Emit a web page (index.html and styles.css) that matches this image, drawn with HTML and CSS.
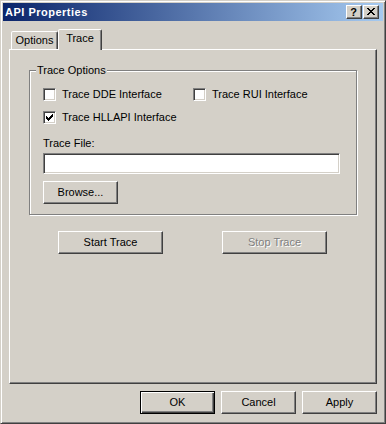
FILE: index.html
```html
<!DOCTYPE html>
<html>
<head>
<meta charset="utf-8">
<link rel="stylesheet" href="styles.css">
</head>
<body>
<div class="window">
  <div class="titlebar">
    <span class="title">API Properties</span>
    <span class="tbtn help">?</span>
    <span class="tbtn close"><svg width="8" height="7" viewBox="0 0 8 7" shape-rendering="crispEdges"><path fill="#000" d="M0 0h2v1h-2zM6 0h2v1h-2zM1 1h2v1h-2zM5 1h2v1h-2zM2 2h4v1h-4zM3 3h2v1h-2zM2 4h4v1h-4zM1 5h2v1h-2zM5 5h2v1h-2zM0 6h2v1h-2zM6 6h2v1h-2z"/></svg></span>
  </div>
  <div class="client">
    <div class="tabs">
      <div class="tab">Options</div>
      <div class="tab active">Trace</div>
    </div>
    <div class="panel">
      <div class="group">
        <span class="legend">Trace Options</span>
        <div class="cbrow">
          <div class="cb col1"><span class="box"></span><span>Trace DDE Interface</span></div>
          <div class="cb"><span class="box"></span><span>Trace RUI Interface</span></div>
        </div>
        <div class="cbrow second">
          <div class="cb"><span class="box"><svg width="7" height="7" viewBox="0 0 7 7" shape-rendering="crispEdges"><path fill="#000" d="M6 0h1v1h-1zM5 1h2v1h-2zM0 2h1v1h-1zM4 2h3v1h-3zM0 3h2v1h-2zM3 3h3v1h-3zM0 4h5v1h-5zM1 5h3v1h-3zM2 6h1v1h-1z"/></svg></span><span>Trace HLLAPI Interface</span></div>
        </div>
        <div class="flabel">Trace File:</div>
        <div class="input"></div>
        <div class="btn browse">Browse...</div>
      </div>
      <div class="traceBtns">
        <div class="btn wide">Start Trace</div>
        <div class="btn wide disabled">Stop Trace</div>
      </div>
    </div>
    <div class="dlgBtns">
      <div class="btn default">OK</div>
      <div class="btn">Cancel</div>
      <div class="btn">Apply</div>
    </div>
  </div>
</div>
</body>
</html>
```
FILE: styles.css
```css
html, body {
  margin: 0;
  padding: 0;
}
body {
  background: #d4d0c8;
  font-family: "Liberation Sans", Arial, sans-serif;
  font-size: 11px;
  color: #000;
}
.window {
  width: 386px;
  height: 424px;
  box-sizing: border-box;
  border: 1px solid;
  border-color: #d4d0c8 #404040 #404040 #d4d0c8;
  box-shadow: inset 1px 1px #fff, inset -1px -1px #808080;
  padding: 2px;
  background: #d4d0c8;
}
.titlebar {
  height: 18px;
  display: flex;
  align-items: center;
  background: linear-gradient(to right, #0a246a, #a6caf0);
  padding-left: 2px;
}
.title {
  flex: 1;
  color: #fff;
  font-weight: bold;
  line-height: 18px;
  letter-spacing: 0.5px;
}
.tbtn {
  width: 16px;
  height: 14px;
  box-sizing: border-box;
  background: #d4d0c8;
  border: 1px solid;
  border-color: #fff #404040 #404040 #fff;
  box-shadow: inset -1px -1px #808080;
  display: flex;
  align-items: center;
  justify-content: center;
}
.tbtn svg {
  display: block;
}
.help {
  margin-right: 1px;
  font-weight: bold;
  font-size: 11px;
  line-height: 12px;
  padding-right: 1px;
}
.close {
  margin-right: 4px;
  padding: 0 1px 1px 0;
}
.client {
  padding: 0 6px;
}
.tabs {
  display: flex;
  align-items: flex-end;
  height: 20px;
  margin-top: 8px;
  padding-left: 2px;
}
.tab {
  height: 18px;
  box-sizing: border-box;
  border: 1px solid;
  border-bottom: none;
  border-color: #fff #404040 transparent #fff;
  border-radius: 2px 2px 0 0;
  box-shadow: inset -1px 0 #808080;
  padding-top: 2px;
  line-height: 13px;
  text-align: center;
  width: 47px;
  background: #d4d0c8;
}
.tab.active {
  width: 44px;
  height: 21px;
  margin-bottom: -1px;
  position: relative;
  z-index: 1;
  padding-top: 2px;
}
.panel {
  height: 335px;
  box-sizing: border-box;
  border: 1px solid;
  border-color: #fff #404040 #404040 #fff;
  box-shadow: inset -1px -1px #808080;
  padding: 20px 0 0 19px;
}
.group {
  position: relative;
  width: 328px;
  box-sizing: border-box;
  border: 1px solid #808080;
  box-shadow: inset 1px 1px #fff, 1px 1px #fff;
  padding: 17px 13px 10px 13px;
}
.legend {
  position: absolute;
  top: -7px;
  left: 6px;
  padding: 0 1px;
  line-height: 13px;
  background: #d4d0c8;
}
.cbrow {
  display: flex;
  height: 13px;
}
.cbrow.second {
  margin-top: 10px;
}
.cb {
  display: flex;
  align-items: center;
  line-height: 13px;
}
.col1 {
  width: 150px;
}
.box {
  width: 13px;
  height: 13px;
  box-sizing: border-box;
  margin-right: 6px;
  background: #fff;
  border: 1px solid;
  border-color: #808080 #fff #fff #808080;
  box-shadow: inset 1px 1px #404040, inset -1px -1px #d4d0c8;
  display: flex;
  align-items: center;
  justify-content: center;
}
.box svg {
  display: block;
}
.flabel {
  margin-top: 13px;
  line-height: 13px;
}
.input {
  margin-top: 3px;
  width: 297px;
  height: 21px;
  box-sizing: border-box;
  background: #fff;
  border: 1px solid;
  border-color: #808080 #fff #fff #808080;
  box-shadow: inset 1px 1px #404040, inset -1px -1px #d4d0c8;
}
.btn {
  width: 75px;
  height: 23px;
  box-sizing: border-box;
  border: 1px solid;
  border-color: #fff #404040 #404040 #fff;
  box-shadow: inset -1px -1px #808080;
  display: flex;
  align-items: center;
  justify-content: center;
  line-height: 13px;
  background: #d4d0c8;
}
.browse {
  margin-top: 7px;
}
.traceBtns {
  display: flex;
  gap: 59px;
  margin-top: 16px;
  margin-left: 29px;
}
.btn.wide {
  width: 105px;
}
.btn.disabled {
  color: #808080;
  text-shadow: 1px 1px #fff;
}
.dlgBtns {
  display: flex;
  justify-content: flex-end;
  gap: 6px;
  margin-top: 7px;
}
.btn.default {
  border: 1px solid #000;
  box-shadow: inset 1px 1px #fff, inset -1px -1px #404040, inset -2px -2px #808080;
}
```
